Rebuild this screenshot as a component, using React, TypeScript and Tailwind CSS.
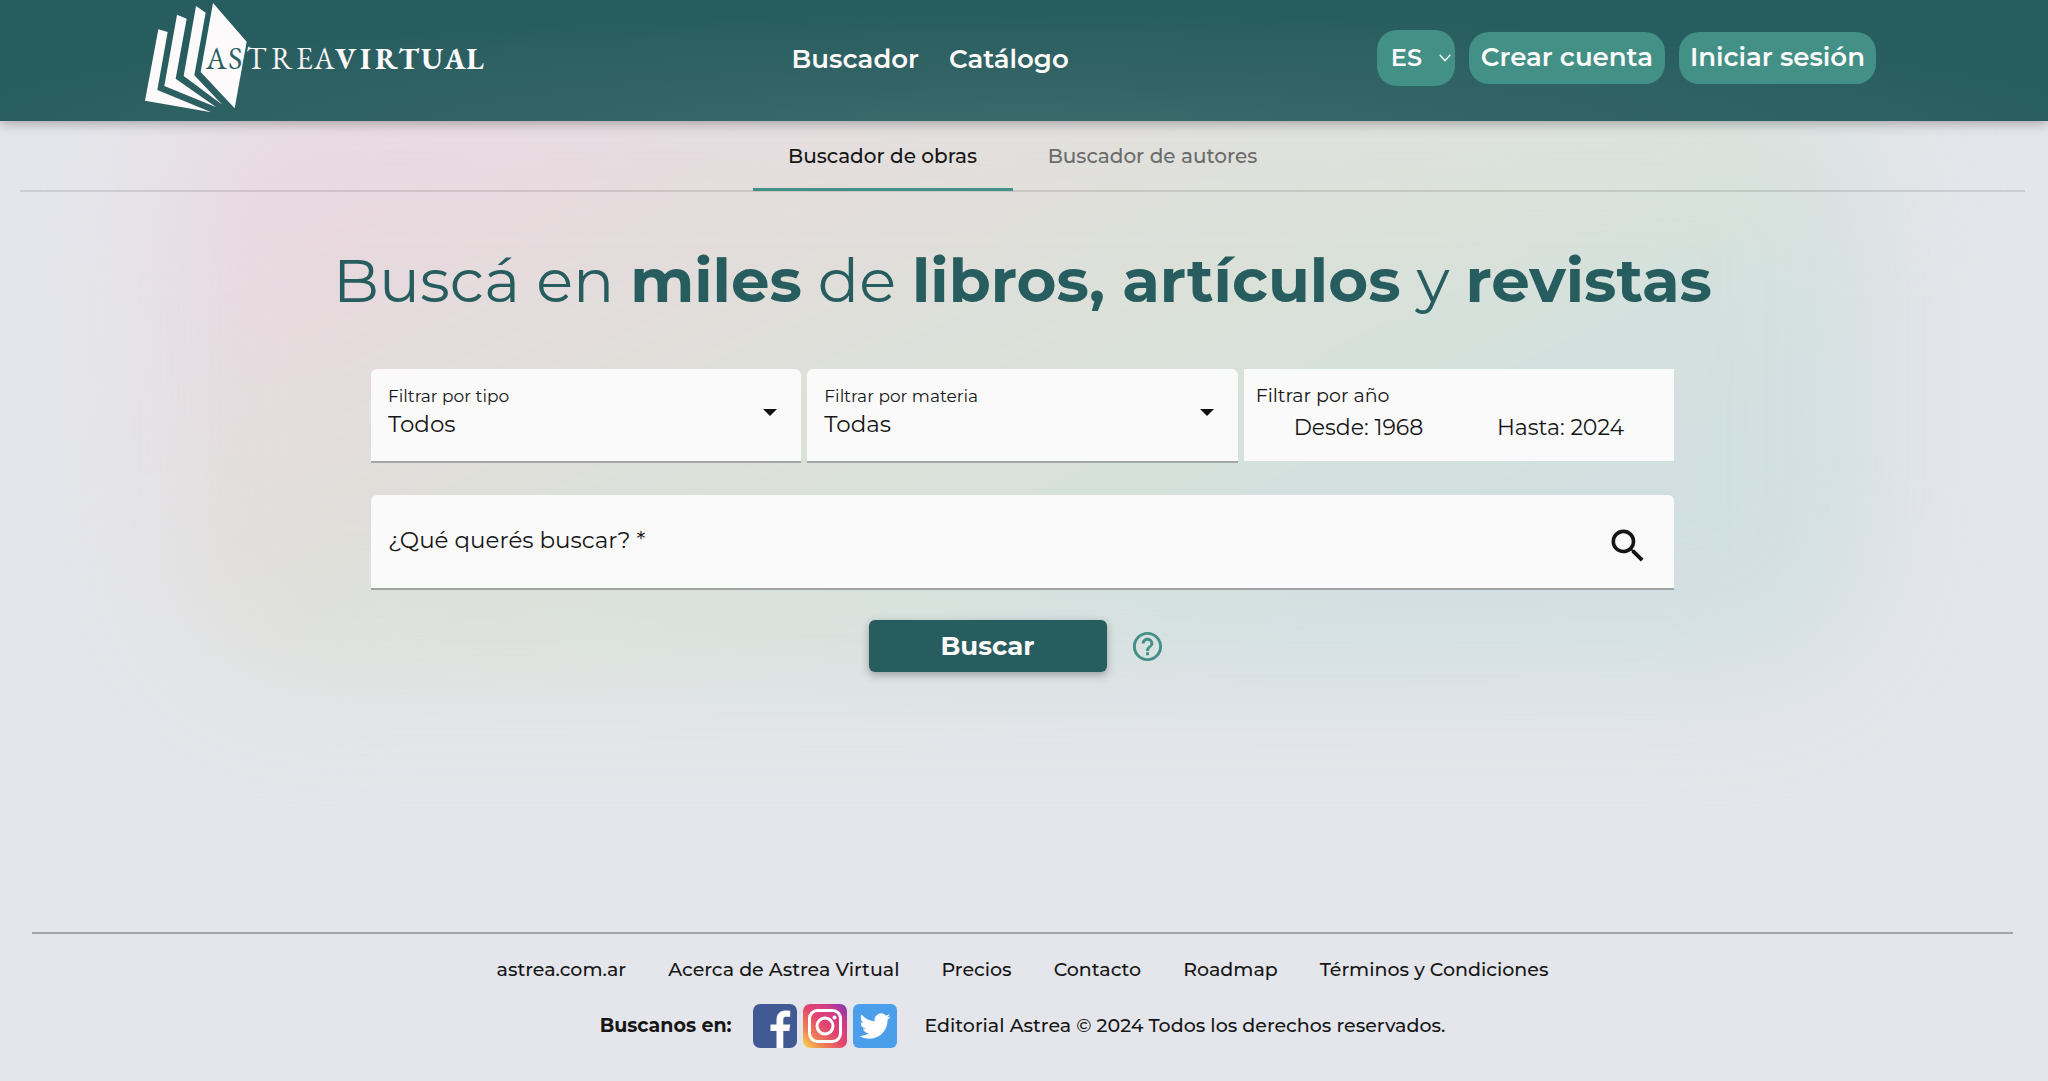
import React from "react";
import { MdHelpOutline, MdSearch } from "react-icons/md";

function Logo() {
  return (
    <a href="#inicio" aria-label="Astrea Virtual" className="block shrink-0">
      <svg viewBox="46 0 1026 363" className="h-[121px] w-[342px]" role="img" aria-label="Astrea Virtual">
        <g fill="#fdfafb">
          <path d="M250 9 351 125 315 325 213 216Z" />
          <path d="M199 18 228 38 194 226 278 314 162 228Z" />
          <path d="M142 44 171 56 138 236 260 322 104 258Z" />
          <path d="M86 88 114 96 83 270 245 337 46 302Z" />
        </g>
        <g fontFamily="'EB Garamond', 'Liberation Serif', serif" fontSize="90">
          <text y="208" fill="#2b5f61">
            <tspan x="228">A</tspan>
            <tspan x="296">S</tspan>
          </text>
          <text y="208" fill="#f6f4f5">
            <tspan x="350">T</tspan>
            <tspan x="425">R</tspan>
            <tspan x="499">E</tspan>
            <tspan x="552">A</tspan>
          </text>
          <text y="208" fill="#fdfafb" fontWeight="700">
            <tspan x="616">V</tspan>
            <tspan x="691">I</tspan>
            <tspan x="736">R</tspan>
            <tspan x="806">T</tspan>
            <tspan x="874">U</tspan>
            <tspan x="943">A</tspan>
            <tspan x="1010">L</tspan>
          </text>
        </g>
      </svg>
    </a>
  );
}

function Header() {
  return (
    <header className="relative z-10 flex items-center justify-between bg-[#285d5f] bg-[radial-gradient(ellipse_55%_100%_at_50%_110%,rgba(255,235,220,0.09),transparent)] pl-[7.1%] pr-[8.4%] text-[#fdfafa] shadow-[0_2px_12px_rgba(0,0,0,0.3)]">
      <Logo />
      <nav className="flex gap-[30px] pb-1 pr-1 text-[26px] font-semibold leading-8">
        <a href="#buscador">Buscador</a>
        <a href="#catalogo">Catálogo</a>
      </nav>
      <div className="flex items-center gap-[14px] pb-[6px] text-[26px] font-semibold">
        <div className="relative">
          <select
            aria-label="Idioma"
            className="h-14 w-[78px] appearance-none rounded-[20px] bg-[#439087] pl-[14px] text-[24px]"
          >
            <option>ES</option>
            <option>EN</option>
          </select>
          <svg viewBox="0 0 12 8" className="pointer-events-none absolute right-1 top-6 h-2 w-3" fill="none" stroke="currentColor" strokeWidth="1.4">
            <path d="m.7.8 5.3 6 5.3-6" />
          </svg>
        </div>
        <button className="h-[52px] rounded-[20px] bg-[#439087] px-3">Crear cuenta</button>
        <button className="h-[52px] rounded-[20px] bg-[#439087] px-[11px]">Iniciar sesión</button>
      </div>
    </header>
  );
}

function Tabs() {
  return (
    <div role="tablist" className="mx-5 flex justify-center border-b-2 border-black/10 text-[20px] font-medium">
      <button role="tab" aria-selected="true" className="-mb-px h-[70px] w-[260px] border-b-[3px] border-[#439087] pt-[3px] text-[#161616]">
        Buscador de obras
      </button>
      <button role="tab" aria-selected="false" className="-mb-px h-[70px] w-[280px] border-b-[3px] border-transparent pt-[3px] text-[#6b6b6b]">
        Buscador de autores
      </button>
    </div>
  );
}

function FilterSelect({ id, label, value }: { id: string; label: string; value: string }) {
  return (
    <div className="relative flex-1 rounded-t-md border-b-2 border-[#a3a5a4] bg-[#fafafa]">
      <label htmlFor={id} className="pointer-events-none absolute left-[17px] top-[15px] text-[17px] leading-6">
        {label}
      </label>
      <select id={id} className="h-[92px] w-full appearance-none bg-transparent px-[17px] pt-[18px] text-[23px]">
        <option>{value}</option>
      </select>
      <svg viewBox="0 0 14 7" className="pointer-events-none absolute right-6 top-10 h-[7px] w-[14px]" fill="#111">
        <path d="M0 0h14L7 7Z" />
      </svg>
    </div>
  );
}

function SearchForm() {
  return (
    <form className="mx-auto mt-[50px] w-full max-w-[1303px]" onSubmit={(e) => e.preventDefault()}>
      <div className="flex items-start gap-[6px]">
        <FilterSelect id="tipo" label="Filtrar por tipo" value="Todos" />
        <FilterSelect id="materia" label="Filtrar por materia" value="Todas" />
        <div className="h-[92px] flex-1 bg-[#fafafa] pt-[15px]">
          <p className="px-3 text-[19px] leading-6">Filtrar por año</p>
          <div className="mt-1 flex justify-between pl-[50px] pr-[50px] text-[22px] leading-8">
            <span>Desde: 1968</span>
            <span>Hasta: 2024</span>
          </div>
        </div>
      </div>
      <div className="mt-8 flex items-center rounded-t-md border-b-2 border-[#a0a3a2] bg-[#fafafa] pr-6">
        <input
          aria-label="¿Qué querés buscar?"
          required
          placeholder="¿Qué querés buscar? *"
          className="h-[93px] flex-1 bg-transparent px-[17px] pb-1 text-[23px] outline-none placeholder:text-[#161616] placeholder:opacity-100"
        />
        <button type="button" aria-label="Buscar" className="pt-2">
          <MdSearch className="size-[44px]" />
        </button>
      </div>
      <div className="mt-[30px] flex items-center justify-center gap-[23px] pr-3">
        <button className="h-[52px] w-[238px] rounded-md bg-[#285d5f] text-[26px] font-bold text-[#fdfafa] shadow-[0_3px_8px_rgba(0,0,0,0.3)]">
          Buscar
        </button>
        <button type="button" aria-label="Ayuda" className="text-[#439087]">
          <MdHelpOutline className="size-[35px]" />
        </button>
      </div>
    </form>
  );
}

function FacebookIcon() {
  return (
    <svg viewBox="0 0 44 44" className="size-11">
      <rect width="44" height="44" rx="7" fill="#415a94" />
      <path d="M23.500 44V27h-6v-6.500h6V16c0-6.300 3.600-9.500 9.300-9.500 1.900 0 3.600.1 4.400.2v6h-3.500c-2.900 0-3.400 1.500-3.400 3.500v4.300h6.900l-.9 6.500h-6v17Z" fill="#fff" />
    </svg>
  );
}

function InstagramIcon() {
  return (
    <svg viewBox="0 0 44 44" className="size-11">
      <defs>
        <linearGradient id="ig" x1="0" y1="1" x2="1" y2="0">
          <stop offset="0" stopColor="#f8dc55" />
          <stop offset=".22" stopColor="#ef8a53" />
          <stop offset=".5" stopColor="#e2456f" />
          <stop offset=".75" stopColor="#d13b87" />
          <stop offset="1" stopColor="#7a37b4" />
        </linearGradient>
      </defs>
      <rect width="44" height="44" rx="7" fill="url(#ig)" />
      <g fill="none" stroke="#fff" strokeWidth="3">
        <rect x="6.500" y="6.500" width="31" height="31" rx="8" />
        <circle cx="22" cy="22" r="8" />
      </g>
      <circle cx="31.500" cy="13.500" r="2" fill="#fff" />
    </svg>
  );
}

function TwitterIcon() {
  return (
    <svg viewBox="0 0 44 44" className="size-11">
      <rect width="44" height="44" rx="6" fill="#4b9fea" />
      <path
        transform="translate(6.500 6.500) scale(1.3)"
        fill="#fff"
        d="M23.953 4.570a10 10 0 0 1-2.825.775 4.958 4.958 0 0 0 2.163-2.723c-.951.555-2.005.959-3.127 1.184a4.920 4.920 0 0 0-8.384 4.482C7.690 8.095 4.067 6.130 1.640 3.162a4.822 4.822 0 0 0-.666 2.475c0 1.710.870 3.213 2.188 4.096a4.904 4.904 0 0 1-2.228-.616v.060a4.923 4.923 0 0 0 3.946 4.827 4.996 4.996 0 0 1-2.212.085 4.936 4.936 0 0 0 4.604 3.417 9.867 9.867 0 0 1-6.102 2.105c-.390 0-.779-.023-1.170-.067a13.995 13.995 0 0 0 7.557 2.209c9.053 0 13.998-7.496 13.998-13.985 0-.210 0-.420-.015-.630a9.935 9.935 0 0 0 2.460-2.548z"
      />
    </svg>
  );
}

const footerLinks = ["astrea.com.ar", "Acerca de Astrea Virtual", "Precios", "Contacto", "Roadmap", "Términos y Condiciones"];

function Footer() {
  return (
    <footer className="mx-8 mt-auto border-t-2 border-[#a3a5a7] pb-[33px] text-[19px] font-medium">
      <nav className="mt-5 flex flex-wrap justify-center gap-x-[42px] leading-8">
        {footerLinks.map((text) => (
          <a key={text} href="#">
            {text}
          </a>
        ))}
      </nav>
      <div className="mt-[18px] flex items-center justify-center">
        <span className="font-bold">Buscanos en:</span>
        <div className="ml-[21px] mr-7 flex gap-[6px]">
          <a href="#facebook" aria-label="Facebook"><FacebookIcon /></a>
          <a href="#instagram" aria-label="Instagram"><InstagramIcon /></a>
          <a href="#twitter" aria-label="Twitter"><TwitterIcon /></a>
        </div>
        <span>Editorial Astrea © 2024 Todos los derechos reservados.</span>
      </div>
    </footer>
  );
}

export default function App() {
  return (
    <div className="relative flex min-h-screen flex-col overflow-hidden bg-[#e5e6eb] font-['Montserrat','Inter',sans-serif] text-[#161616]">
      <div className="pointer-events-none absolute inset-x-[8.5%] top-[90px] h-[590px] rounded-[120px] bg-[linear-gradient(155deg,#ead8e0_14%,#e1deda_34%,#d9e2d9_54%,#d0dfe0_76%,#d2e0e3_100%)] blur-[64px]" />
      <Header />
      <div className="relative flex flex-1 flex-col pr-[3px]">
        <main>
          <Tabs />
          <h1 className="mt-[50px] text-center text-[61px] leading-[77px] text-[#285d5f]">
            Buscá en <b className="font-bold">miles</b> de <b className="font-bold">libros, artículos</b> y{" "}
            <b className="font-bold">revistas</b>
          </h1>
          <SearchForm />
        </main>
        <Footer />
      </div>
    </div>
  );
}
